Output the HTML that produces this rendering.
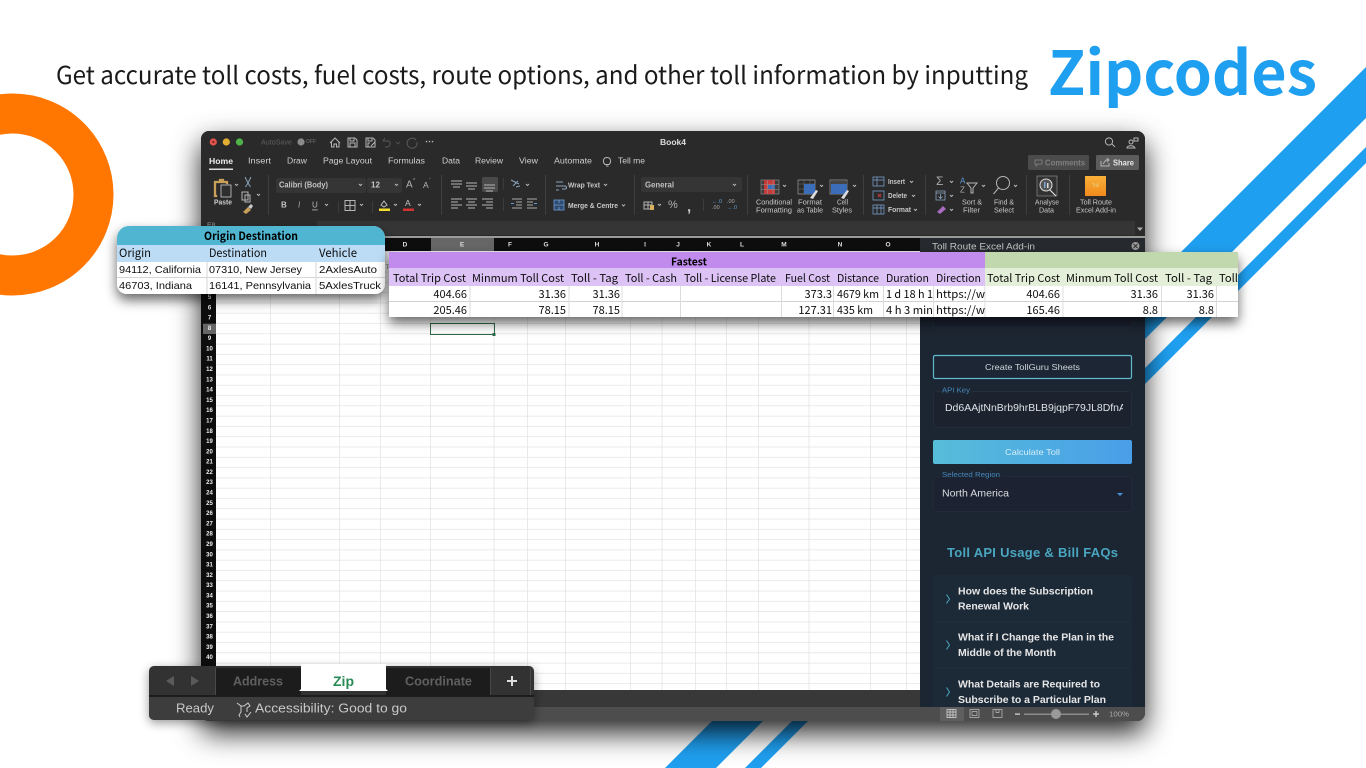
<!DOCTYPE html>
<html lang="en">
<head>
<meta charset="utf-8">
<title>Zipcodes</title>
<style>
html,body{margin:0;padding:0;background:#fff;width:1366px;height:768px;overflow:hidden}
svg{display:block}
text{font-family:"Liberation Sans",sans-serif;dominant-baseline:central;white-space:pre}
.hum,.hum text{font-family:"Noto Sans CJK JP","Liberation Sans",sans-serif}
.base{dominant-baseline:alphabetic}
.r text{fill:#d0d0d0;font-size:8px}
.rb text{fill:#c8c8c8;font-size:7px}
.n text{fill:#eee;font-size:6px;font-weight:bold;text-anchor:middle}
.h text{fill:#ddd;font-size:6.5px;font-weight:bold;text-anchor:middle}
.t text{fill:#0c0c0c;font-size:11px}
.tv text{fill:#0c0c0c;font-size:11px;text-anchor:end}
.ic{fill:none;stroke:#b5b5b5;stroke-width:1}
</style>
</head>
<body>
<svg width="1366" height="768" viewBox="0 0 1366 768" xmlns="http://www.w3.org/2000/svg">
<defs>
<filter id="ws" filterUnits="userSpaceOnUse" x="120" y="90" width="1110" height="678"><feDropShadow dx="0" dy="12" stdDeviation="14" flood-color="#000" flood-opacity=".85"/></filter>
<filter id="ts" filterUnits="userSpaceOnUse" x="90" y="200" width="1190" height="160"><feDropShadow dx="0" dy="6" stdDeviation="6" flood-color="#000" flood-opacity=".6"/></filter>
<filter id="bs" filterUnits="userSpaceOnUse" x="120" y="640" width="450" height="120"><feDropShadow dx="0" dy="3" stdDeviation="5" flood-color="#000" flood-opacity=".4"/></filter>
<filter id="soft" filterUnits="userSpaceOnUse" x="100" y="120" width="1160" height="640"><feGaussianBlur stdDeviation=".28"/></filter>
<linearGradient id="calc" x1="0" x2="1" y1="0" y2="0"><stop offset="0" stop-color="#56bdd9"/><stop offset="1" stop-color="#4a9ee8"/></linearGradient>
<linearGradient id="org" x1="0" x2="0" y1="0" y2="1"><stop offset="0" stop-color="#f9b13a"/><stop offset="1" stop-color="#f08a1c"/></linearGradient>
<pattern id="rows" patternUnits="userSpaceOnUse" x="216" y="293" width="704" height="10.29"><rect width="704" height="10.29" fill="#fff"/><rect y="9.6" width="704" height=".7" fill="#e2e2e2"/></pattern>
</defs>

<!-- Background decor -->
<circle cx="12.5" cy="194.5" r="81" fill="none" stroke="#ff7700" stroke-width="40"/>
<polygon points="1366,67 1366,118 716,768 665,768" fill="#1f9ff0"/>
<polygon points="1366,147 1366,163 761,768 745,768" fill="#1f9ff0"/>

<!-- Title -->
<text class="hum base" x="56" y="84" font-size="24.5" fill="#1a1a1a" textLength="972" lengthAdjust="spacingAndGlyphs">Get accurate toll costs, fuel costs, route options, and other toll information by inputting</text>
<text class="hum base" x="1048" y="95" font-size="61" font-weight="bold" fill="#1f9ff0" textLength="269" lengthAdjust="spacingAndGlyphs">Zipcodes</text>

<!-- Window -->
<rect x="201" y="131" width="944" height="590" rx="8" fill="#2a2a2a" filter="url(#ws)"/>
<g filter="url(#soft)">
<rect x="201" y="131" width="944" height="90" rx="8" fill="#2b2b2b"/>
<rect x="201" y="150" width="944" height="70" fill="#292929"/>
<circle cx="213.3" cy="142" r="3.6" fill="#e2554f"/><circle cx="213.3" cy="142" r="1.2" fill="#8e2520"/>
<circle cx="226.3" cy="142" r="3.6" fill="#e4ae33"/>
<circle cx="239.5" cy="142" r="3.6" fill="#4fb548"/>
<text x="261" y="142" font-size="7.5" fill="#5f5f5f" textLength="31" lengthAdjust="spacingAndGlyphs">AutoSave</text>
<circle cx="301" cy="142" r="3.6" fill="#8a8a8a"/>
<text x="306" y="142" font-size="5" fill="#5f5f5f" font-weight="bold">OFF</text>
<path class="ic" d="M330 143l5-5 5 5M331.500 142v5h2.500v-3h2.500v3h2.500v-5"/>
<path class="ic" d="M348 138h7l2 2v7h-9zM350 138v3h4v-3M350 147v-4h5v4"/>
<path class="ic" d="M366 138h7l2 2v7h-9zM368 138v3h4v-3M368 147v-4h2M371 146l4-4"/>
<path d="M383 141l2-3M383 141h5c3 0 3 6-1 6h-2" fill="none" stroke="#5a5a5a"/>
<path d="M396 142l2 2 2-2" fill="none" stroke="#555" stroke-width=".8"/>
<path d="M416 140a5 5 0 1 0 1 2" fill="none" stroke="#5a5a5a"/>
<text x="425" y="141" font-size="9" font-weight="bold" fill="#bbb">⋯</text>
<text x="660" y="142" font-size="8.500" font-weight="bold" fill="#ddd" textLength="26" lengthAdjust="spacingAndGlyphs">Book4</text>
<circle cx="1109" cy="141.500" r="3.600" class="ic"/><path class="ic" d="M1112 144l3 3"/>
<circle cx="1131" cy="142" r="2" class="ic"/><path class="ic" d="M1127 148c0-3 7-3 8 0zM1134 138h4v3h-4z"/>

<!-- Tabs -->
<g class="r">
<text x="209" y="161" style="font-size:8.5px;font-weight:bold;fill:#eee" textLength="24" lengthAdjust="spacingAndGlyphs">Home</text>
<text x="248" y="161" textLength="23" lengthAdjust="spacingAndGlyphs">Insert</text>
<text x="287" y="161" textLength="20" lengthAdjust="spacingAndGlyphs">Draw</text>
<text x="323" y="161" textLength="49" lengthAdjust="spacingAndGlyphs">Page Layout</text>
<text x="388" y="161" textLength="37" lengthAdjust="spacingAndGlyphs">Formulas</text>
<text x="442" y="161" textLength="18" lengthAdjust="spacingAndGlyphs">Data</text>
<text x="475" y="161" textLength="28" lengthAdjust="spacingAndGlyphs">Review</text>
<text x="519" y="161" textLength="19" lengthAdjust="spacingAndGlyphs">View</text>
<text x="554" y="161" textLength="38" lengthAdjust="spacingAndGlyphs">Automate</text>
<text x="618" y="161" textLength="27" lengthAdjust="spacingAndGlyphs">Tell me</text>
</g>
<rect x="209" y="168.500" width="24" height="1.500" fill="#ddd"/>
<path class="ic" d="M605 164.500c-3-3-1.500-7 2-7s5 4 2 7zM606 166h2.500"/>

<!-- Comments / Share -->
<rect x="1028" y="155" width="61" height="15" rx="1.500" fill="#4c4c4c"/>
<path d="M1035 160h7v4h-4l-2 2v-2h-1z" fill="none" stroke="#777"/>
<text x="1045" y="163" font-size="8" font-weight="bold" fill="#808080" textLength="40" lengthAdjust="spacingAndGlyphs">Comments</text>
<rect x="1096" y="155" width="43" height="15" rx="1.500" fill="#5c5c5c"/>
<path class="ic" d="M1101 161v5h8v-3M1103 164l3-4h3M1107 158l2 2-2 2"/>
<text x="1113" y="163" font-size="8" font-weight="bold" fill="#e8e8e8" textLength="21" lengthAdjust="spacingAndGlyphs">Share</text>

<!-- Ribbon: clipboard -->
<path d="M214 181h5v-2h5v2h4v3h-2v-1h-10v12h1v2h-3z" fill="#c9a05a" stroke="#c9a05a" stroke-width=".3"/>
<rect x="221" y="185" width="10" height="12" fill="#2f2f2f" stroke="#ccc" stroke-width=".8"/>
<path class="ic" d="M235 184l1.500 1.500 1.500-1.500"/>
<text x="214" y="203" font-size="7" font-weight="bold" fill="#ccc" textLength="18" lengthAdjust="spacingAndGlyphs">Paste</text>
<path d="M245 177l3 6 3-6M248 183l-2.500 4M248 183l2.500 4" fill="none" stroke="#8ca3c0" stroke-width="1"/>
<path class="ic" d="M242 192h6v8h-6zM245 195h5v7h-5z"/><path class="ic" d="M257 194l1.500 1.500 1.500-1.500"/>
<path d="M243 212l5-5 3 3-5 4z" fill="#c9a05a"/><path d="M248 207l3-3 2 2-2 3z" fill="#ccc"/>
<rect x="268" y="175" width=".8" height="40" fill="#444"/>

<!-- Font -->
<rect x="276" y="178" width="90" height="15" rx="2" fill="#353535"/>
<rect x="367" y="178" width="35" height="15" rx="2" fill="#353535"/>
<text x="279" y="185" font-size="8" font-weight="bold" fill="#c4c4c4" textLength="49" lengthAdjust="spacingAndGlyphs">Calibri (Body)</text>
<path class="ic" d="M359 184l1.500 1.500 1.500-1.500M395 184l1.500 1.500 1.500-1.500"/>
<text x="371" y="185" font-size="8" font-weight="bold" fill="#c8c8c8">12</text>
<text x="406" y="185" font-size="10" fill="#b5b5b5">A</text><text x="413" y="181" font-size="5" fill="#b5b5b5">^</text>
<text x="423" y="185" font-size="8.500" fill="#b5b5b5">A</text><text x="429" y="181" font-size="5" fill="#b5b5b5">ˇ</text>
<text x="281" y="205" font-size="8" font-weight="bold" fill="#c4c4c4">B</text>
<text x="298" y="205" font-size="8" font-style="italic" fill="#aaa">I</text>
<text x="312" y="205" font-size="8" fill="#bbb" text-decoration="underline">U</text>
<path class="ic" d="M325 204l1.500 1.500 1.500-1.500"/>
<rect x="338" y="201" width=".7" height="12" fill="#444"/>
<path class="ic" d="M345 200.500h10v10h-10zM350 200.500v10M345 205.500h10"/><path class="ic" d="M360 204l1.500 1.500 1.500-1.500"/>
<rect x="372" y="201" width=".7" height="12" fill="#444"/>
<path d="M381 205l3-4 3 4-3 2z" fill="none" stroke="#bbb"/>
<rect x="379" y="208.500" width="11" height="2.500" fill="#f2dc2d"/><path class="ic" d="M394 204l1.500 1.500 1.500-1.500"/>
<text x="405" y="203" font-size="8.500" fill="#c4c4c4">A</text>
<rect x="403" y="208.500" width="11" height="2.500" fill="#d23030"/><path class="ic" d="M418 204l1.500 1.500 1.500-1.500"/>
<rect x="441" y="175" width=".8" height="40" fill="#444"/>

<!-- Align -->
<path class="ic" stroke-width=".9" d="M451 181h11M451 184h11M453 187h7M466 183h11M466 186h11M468 189h7"/>
<rect x="482" y="177" width="16" height="15" rx="1.500" fill="#4a4a4a"/>
<path class="ic" d="M484 185h11M484 188h11M486 191h7"/>
<rect x="503" y="178" width=".7" height="12" fill="#444"/>
<path d="M511 180l8 4M513 186l5-5M516 187l4-1" fill="none" stroke="#8ca3c0"/><path class="ic" d="M526 184l1.500 1.500 1.500-1.500"/>
<path class="ic" d="M451 199h11M451 202h7M451 205h11M451 208h7M466 199h11M468 202h7M466 205h11M468 208h7M482 199h11M486 202h7M482 205h11M486 208h7"/>
<rect x="503" y="198" width=".7" height="13" fill="#444"/>
<path d="M512 199h10M512 208h10M516 202h6M516 205h6" fill="none" stroke="#aaa"/><path d="M511 203.500h3" stroke="#5c9bd5"/>
<path d="M527 199h10M527 208h10M527 202h6M527 205h6" fill="none" stroke="#aaa"/><path d="M534 203.500h3" stroke="#5c9bd5"/>
<rect x="545" y="175" width=".8" height="40" fill="#444"/>

<!-- Wrap -->
<path d="M556 182h7M556 186h9c2 0 2 3 0 3h-3M556 190h3" fill="none" stroke="#8ca3c0"/>
<text x="568" y="185" font-size="7.500" font-weight="bold" fill="#c8c8c8" textLength="32" lengthAdjust="spacingAndGlyphs">Wrap Text</text>
<path class="ic" d="M604 184l1.500 1.500 1.500-1.500"/>
<rect x="554" y="200" width="10" height="10" fill="#2e4b70" stroke="#6a9cd8" stroke-width=".8"/><path d="M554 205h10M559 200v3M559 207v3" stroke="#9cc0e8" stroke-width=".6"/>
<text x="568" y="205.500" font-size="7.500" font-weight="bold" fill="#c8c8c8" textLength="50" lengthAdjust="spacingAndGlyphs">Merge &amp; Centre</text>
<path class="ic" d="M622 204.500l1.500 1.500 1.500-1.500"/>
<rect x="634" y="175" width=".8" height="40" fill="#444"/>

<!-- Number -->
<rect x="641" y="177" width="101" height="15" rx="2" fill="#353535"/>
<text x="645" y="185" font-size="8" font-weight="bold" fill="#c0c0c0" textLength="29" lengthAdjust="spacingAndGlyphs">General</text>
<path class="ic" d="M733 184l1.500 1.500 1.500-1.500"/>
<path class="ic" d="M644 202h8v7h-8zM648 202v7M644 205h8"/><rect x="650" y="205" width="4" height="5" fill="#d8b060"/>
<path class="ic" d="M658 204l1.500 1.500 1.500-1.500"/>
<text x="668" y="205" font-size="11" fill="#b5b5b5">%</text>
<text x="687" y="207" font-size="15" font-weight="bold" fill="#c8c8c8">,</text>
<rect x="703" y="199" width=".7" height="12" fill="#444"/>
<text x="712" y="202" font-size="5.500" fill="#5c9bd5">←.0</text><text x="712" y="208" font-size="5.500" fill="#aaa">.00</text>
<text x="727" y="202" font-size="5.500" fill="#aaa">.00</text><text x="727" y="208" font-size="5.500" fill="#5c9bd5">→.0</text>
<rect x="747" y="175" width=".8" height="40" fill="#444"/>

<!-- Styles -->
<rect x="761" y="180" width="18" height="14" fill="#3c3c3c" stroke="#999" stroke-width=".6"/>
<rect x="764" y="180" width="11" height="5" fill="#c83a3a"/><rect x="764" y="185" width="4" height="4" fill="#c83a3a"/><rect x="768" y="185" width="7" height="4" fill="#3b6db8"/><rect x="764" y="189" width="11" height="5" fill="#c83a3a"/>
<path d="M761 184.700h18M761 189.300h18M767.500 180v14M773 180v14" stroke="#999" stroke-width=".5"/>
<path class="ic" d="M783 185l1.500 1.500 1.500-1.500"/>
<path d="M798 180h17v14h-17z" fill="none" stroke="#999" stroke-width=".7"/><path d="M798 184h17M804 180v14M810 180v14M798 189h17" stroke="#777" stroke-width=".5"/><rect x="804" y="184" width="11" height="10" fill="#3b6db8"/>
<path d="M810 198l6-8 2 1-5 8z" fill="#ddd"/>
<path class="ic" d="M820 185l1.500 1.500 1.500-1.500"/>
<path d="M830 180h17v14h-17z" fill="none" stroke="#999" stroke-width=".7"/><rect x="830" y="181" width="17" height="3" fill="#444"/><rect x="831" y="184" width="16" height="10" fill="#3b6db8"/>
<path d="M841 198l6-8 2 1-5 8z" fill="#ddd"/>
<path class="ic" d="M853 185l1.500 1.500 1.500-1.500"/>
<g class="rb">
<text x="756" y="203" textLength="36" lengthAdjust="spacingAndGlyphs">Conditional</text><text x="756" y="211" textLength="36" lengthAdjust="spacingAndGlyphs">Formatting</text>
<text x="798" y="203" textLength="24" lengthAdjust="spacingAndGlyphs">Format</text><text x="797" y="211" textLength="26" lengthAdjust="spacingAndGlyphs">as Table</text>
<text x="837" y="203" textLength="11" lengthAdjust="spacingAndGlyphs">Cell</text><text x="832" y="211" textLength="20" lengthAdjust="spacingAndGlyphs">Styles</text>
<text x="962" y="203" textLength="20" lengthAdjust="spacingAndGlyphs">Sort &amp;</text><text x="963" y="211" textLength="17" lengthAdjust="spacingAndGlyphs">Filter</text>
<text x="994" y="203" textLength="20" lengthAdjust="spacingAndGlyphs">Find &amp;</text><text x="994" y="211" textLength="20" lengthAdjust="spacingAndGlyphs">Select</text>
<text x="1035" y="203" textLength="24" lengthAdjust="spacingAndGlyphs">Analyse</text><text x="1039" y="211" textLength="15" lengthAdjust="spacingAndGlyphs">Data</text>
<text x="1080" y="203" textLength="32" lengthAdjust="spacingAndGlyphs">Toll Route</text><text x="1076" y="211" textLength="40" lengthAdjust="spacingAndGlyphs">Excel Add-in</text>
</g>
<rect x="863" y="175" width=".8" height="40" fill="#444"/>

<!-- Cells -->
<path d="M873 177h11v9h-11zM873 180h11M877 177v9" fill="none" stroke="#7da6d8" stroke-width=".7"/>
<path d="M873 191h11v9h-11z" fill="none" stroke="#7da6d8" stroke-width=".7"/><path d="M878 194l3 3M881 194l-3 3" stroke="#c83a3a"/>
<path d="M873 205h11v9h-11zM873 208h11M877 205v9M881 205v9" fill="none" stroke="#7da6d8" stroke-width=".7"/>
<text x="888" y="181.500" font-size="7.500" font-weight="bold" fill="#c8c8c8" textLength="17" lengthAdjust="spacingAndGlyphs">Insert</text>
<text x="888" y="195.500" font-size="7.500" font-weight="bold" fill="#c8c8c8" textLength="19" lengthAdjust="spacingAndGlyphs">Delete</text>
<text x="888" y="209.500" font-size="7.500" font-weight="bold" fill="#c8c8c8" textLength="23" lengthAdjust="spacingAndGlyphs">Format</text>
<path class="ic" d="M910 181l1.500 1.500 1.500-1.500M912 195l1.500 1.500 1.500-1.500M914 209l1.500 1.500 1.500-1.500"/>
<rect x="925" y="175" width=".8" height="40" fill="#444"/>

<!-- Editing -->
<text x="936" y="181" font-size="12" fill="#aaa">Σ</text>
<path class="ic" d="M950 181l1.500 1.500 1.500-1.500M950 195l1.500 1.500 1.500-1.500M950 209l1.500 1.500 1.500-1.500"/>
<path d="M936 191h9v9h-9zM936 193h9M940.500 194v4M938.500 196.500l2 2 2-2" fill="none" stroke="#8ca3c0" stroke-width=".8"/>
<path d="M937 212l6-6 3 3-6 5z" fill="#a86dc0"/>
<text x="960" y="181" font-size="8" fill="#5c9bd5">A</text><text x="960" y="190" font-size="8" fill="#aaa">Z</text>
<path class="ic" d="M967 183h10l-4 5v5h-2v-5z"/>
<path class="ic" d="M982 185l1.500 1.500 1.500-1.500"/>
<circle cx="1003" cy="183" r="6.500" class="ic"/><path class="ic" d="M998.500 188l-5 6"/>
<path class="ic" d="M1014 185l1.500 1.500 1.500-1.500"/>
<rect x="1026" y="175" width=".8" height="40" fill="#444"/>

<!-- Analyse -->
<rect x="1037" y="176" width="20" height="20" fill="#333" stroke="#999" stroke-width=".6"/>
<circle cx="1046" cy="185" r="6" fill="#555" stroke="#ddd"/><rect x="1044" y="182" width="1.500" height="6" fill="#7da6d8"/><rect x="1047" y="183" width="1.500" height="5" fill="#ddd"/>
<path d="M1050 190l6 6" stroke="#ddd" stroke-width="1.200"/>
<rect x="1069" y="175" width=".8" height="40" fill="#444"/>
<rect x="1085" y="176" width="21" height="20" fill="url(#org)"/>
<text x="1095.500" y="186" font-size="5" fill="#e8d080" text-anchor="middle">Toll</text>

<!-- Formula bar -->
<rect x="201" y="220" width="944" height="16" fill="#2a2a2a"/>
<rect x="317" y="221" width="818" height="14" fill="#363636"/>
<text x="207" y="226" font-size="7" fill="#999">E8</text>
<path d="M1137 227.500h6l-3 3.500z" fill="#aaa"/>
<rect x="201" y="236" width="944" height="2" fill="#9a9a9a"/>

<!-- Sheet -->
<rect x="201" y="238" width="719" height="470" fill="#111"/>
<rect x="216" y="251" width="704" height="439" fill="url(#rows)"/>
<path d="M270.500 251V690M339.500 251V690M380.500 251V690M430.500 251V690M494 251V690M527.500 251V690M565.500 251V690M630.500 251V690M662 251V690M695.500 251V690M726.500 251V690M758.500 251V690M809 251V690M870.500 251V690M906.500 251V690" stroke="#e2e2e2" stroke-width=".7"/>
<rect x="431" y="238" width="63" height="13" fill="#666"/>
<g class="h">
<text x="405" y="245">D</text><text x="462" y="245">E</text><text x="510" y="245">F</text><text x="546" y="245">G</text><text x="597" y="245">H</text><text x="645" y="245">I</text><text x="678" y="245">J</text><text x="709" y="245">K</text><text x="742" y="245">L</text><text x="784" y="245">M</text><text x="840" y="245">N</text><text x="888" y="245">O</text>
</g>
<rect x="203" y="323.700" width="13" height="10.300" fill="#666"/>
<g class="n">
<text x="209.500" y="298">5</text><text x="209.500" y="308.300">6</text><text x="209.500" y="318.600">7</text><text x="209.500" y="328.900">8</text><text x="209.500" y="339.200">9</text><text x="209.500" y="349.500">10</text><text x="209.500" y="359.700">11</text><text x="209.500" y="370">12</text><text x="209.500" y="380.300">13</text><text x="209.500" y="390.600">14</text><text x="209.500" y="400.900">15</text><text x="209.500" y="411.200">16</text><text x="209.500" y="421.500">17</text><text x="209.500" y="431.800">18</text><text x="209.500" y="442.100">19</text><text x="209.500" y="452.400">20</text><text x="209.500" y="462.600">21</text><text x="209.500" y="472.900">22</text><text x="209.500" y="483.200">23</text><text x="209.500" y="493.500">24</text><text x="209.500" y="503.800">25</text><text x="209.500" y="514.100">26</text><text x="209.500" y="524.400">27</text><text x="209.500" y="534.700">28</text><text x="209.500" y="545">29</text><text x="209.500" y="555.300">30</text><text x="209.500" y="565.500">31</text><text x="209.500" y="575.800">32</text><text x="209.500" y="586.100">33</text><text x="209.500" y="596.400">34</text><text x="209.500" y="606.700">35</text><text x="209.500" y="617">36</text><text x="209.500" y="627.300">37</text><text x="209.500" y="637.600">38</text><text x="209.500" y="647.900">39</text><text x="209.500" y="658.200">40</text>
</g>
<rect x="430.500" y="323.500" width="64" height="11" fill="none" stroke="#2f6b48" stroke-width="1"/>
<rect x="492.500" y="333" width="3" height="3" fill="#2f6b48"/>
<text x="385.500" y="268" font-size="6" fill="#777">Te</text>

<!-- Sheet tabs / status -->
<rect x="201" y="690" width="719" height="18" fill="#383838"/>
<path d="M201 707h944v6c0 4-3 8-8 8H209c-5 0-8-4-8-8z" fill="#4e4e4e"/>

<!-- Task pane -->
<rect x="920" y="238" width="225" height="14" fill="#26292d"/>
<text x="932" y="246.500" font-size="9" fill="#c4c4c4" textLength="103" lengthAdjust="spacingAndGlyphs">Toll Route Excel Add-in</text>
<circle cx="1135.500" cy="246" r="4" fill="#999"/><path d="M1133.500 244l4 4M1137.500 244l-4 4" stroke="#333" stroke-width="1"/>
<rect x="920" y="252" width="225" height="455" fill="#1c2530"/>
<rect x="933" y="290" width="199" height="38" rx="3" fill="#1b2430" stroke="#222c38"/>
<rect x="933.500" y="355.500" width="198" height="23" rx="1.500" fill="#1c2634" stroke="#5fb9cf" stroke-width="1.200"/>
<text x="1032.500" y="367" font-size="8.500" fill="#cfd6da" text-anchor="middle" textLength="95" lengthAdjust="spacingAndGlyphs">Create TollGuru Sheets</text>
<rect x="933.500" y="391.500" width="198" height="36" rx="3" fill="#1a222d" stroke="#232d39"/>
<rect x="940" y="388" width="32" height="6" fill="#1c2530"/>
<text x="942" y="391" font-size="7" fill="#4686bd" textLength="28" lengthAdjust="spacingAndGlyphs">API Key</text>
<svg x="945" y="400" width="178" height="16" viewBox="945 400 178 16"><text x="945" y="408" font-size="10.500" fill="#dde3e8" textLength="181" lengthAdjust="spacingAndGlyphs">Dd6AAjtNnBrb9hrBLB9jqpF79JL8DfnA</text></svg>
<rect x="933" y="440" width="199" height="24" rx="2" fill="url(#calc)"/>
<text x="1032.500" y="452" font-size="8.500" fill="#d6eff8" text-anchor="middle" textLength="55" lengthAdjust="spacingAndGlyphs">Calculate Toll</text>
<rect x="933.500" y="476.500" width="198" height="35" rx="2" fill="#1b2430" stroke="#222c38"/>
<rect x="940" y="472" width="62" height="6" fill="#1c2530"/>
<text x="942" y="475.500" font-size="7" fill="#4686bd" textLength="58" lengthAdjust="spacingAndGlyphs">Selected Region</text>
<text x="942" y="493.500" font-size="10.500" fill="#d8dde0" textLength="67" lengthAdjust="spacingAndGlyphs">North America</text>
<path d="M1117 493h6l-3 3z" fill="#4a90d8"/>
<text x="947" y="552.500" font-size="13" font-weight="bold" fill="#4aa6c0" textLength="171" lengthAdjust="spacing">Toll API Usage &amp; Bill FAQs</text>
<path d="M933 707V579a4 4 0 0 1 4-4h191a4 4 0 0 1 4 4v128z" fill="#1f2a38"/>
<path d="M935 622h195M935 668h195" stroke="#27323f" stroke-width=".8"/>
<path d="M946.500 594.500l3 4.500-3 4.500M946.500 640.500l3 4.500-3 4.500M946.500 687.500l3 4.500-3 4.500" fill="none" stroke="#4aa6c0" stroke-width="1"/>
<text x="958" y="591.500" font-size="10.500" font-weight="bold" fill="#e6e6e6" textLength="135" lengthAdjust="spacing">How does the Subscription</text>
<text x="958" y="606.500" font-size="10.500" font-weight="bold" fill="#e6e6e6" textLength="71" lengthAdjust="spacing">Renewal Work</text>
<text x="958" y="637.500" font-size="10.500" font-weight="bold" fill="#e6e6e6" textLength="156" lengthAdjust="spacing">What if I Change the Plan in the</text>
<text x="958" y="653" font-size="10.500" font-weight="bold" fill="#e6e6e6" textLength="98" lengthAdjust="spacing">Middle of the Month</text>
<text x="958" y="684.500" font-size="10.500" font-weight="bold" fill="#e6e6e6" textLength="142" lengthAdjust="spacing">What Details are Required to</text>
<text x="958" y="700" font-size="10.500" font-weight="bold" fill="#e6e6e6" textLength="148" lengthAdjust="spacing">Subscribe to a Particular Plan</text>
<path d="M1145 707v6c0 4-3 8-8 8h-217v-14z" fill="#4e4e4e"/>
<rect x="940" y="707" width="24" height="14" fill="#5f5f5f"/>
<path d="M947 709.500h9v8h-9zM947 712h9M947 715h9M950 709.500v8M953 709.500v8" fill="none" stroke="#ddd" stroke-width=".7"/>
<path d="M970 709.500h9v8h-9zM972 711.500h5v4h-5z" fill="none" stroke="#bbb" stroke-width=".7"/>
<path d="M993 709.500h9v8h-9zM996 709.500v3h3v-3" fill="none" stroke="#bbb" stroke-width=".7"/>
<rect x="1015" y="713.500" width="5" height="1.200" fill="#ddd"/>
<rect x="1024" y="713.500" width="65" height="1.500" fill="#8a8a8a"/>
<circle cx="1056" cy="714" r="5" fill="#999"/>
<path d="M1093 714h6M1096 711v6" stroke="#ddd" stroke-width="1.200"/>
<text x="1109" y="714" font-size="7.500" fill="#aaa" textLength="20" lengthAdjust="spacingAndGlyphs">100%</text>
</g>

<!-- Origin Destination table -->
<g filter="url(#ts)">
<path d="M117 238a12 12 0 0 1 12-12h244a12 12 0 0 1 12 12v46a10 10 0 0 1-10 10H127a10 10 0 0 1-10-10z" fill="#fff"/>
</g>
<g filter="url(#soft)">
<path d="M117 245v-7a12 12 0 0 1 12-12h244a12 12 0 0 1 12 12v7z" fill="#50b5d0"/>
<rect x="117" y="245" width="268" height="17" fill="#bcdcf6"/>
<path d="M117 277.500h268" stroke="#d5d5d5" stroke-width="1"/>
<path d="M207 262V294M316 262V294" stroke="#d5d5d5" stroke-width="1"/>
<text class="hum" x="204" y="236" font-size="11.500" font-weight="bold" fill="#000" textLength="94" lengthAdjust="spacingAndGlyphs">Origin Destination</text>
<text class="hum" x="119" y="253" font-size="11.500" fill="#0c0c0c" textLength="32" lengthAdjust="spacingAndGlyphs">Origin</text>
<text class="hum" x="209" y="253" font-size="11.500" fill="#0c0c0c" textLength="58" lengthAdjust="spacingAndGlyphs">Destination</text>
<text class="hum" x="319" y="253" font-size="11.500" fill="#0c0c0c" textLength="38" lengthAdjust="spacingAndGlyphs">Vehicle</text>
<text x="119" y="270" font-size="10.500" fill="#111" textLength="82" lengthAdjust="spacingAndGlyphs">94112, California</text>
<text x="209" y="270" font-size="10.500" fill="#111" textLength="93" lengthAdjust="spacingAndGlyphs">07310, New Jersey</text>
<text x="319" y="270" font-size="10.500" fill="#111" textLength="58" lengthAdjust="spacingAndGlyphs">2AxlesAuto</text>
<text x="119" y="286" font-size="10.500" fill="#111" textLength="73" lengthAdjust="spacingAndGlyphs">46703, Indiana</text>
<text x="209" y="286" font-size="10.500" fill="#111" textLength="102" lengthAdjust="spacingAndGlyphs">16141, Pennsylvania</text>
<text x="319" y="286" font-size="10.500" fill="#111" textLength="62" lengthAdjust="spacingAndGlyphs">5AxlesTruck</text>
</g>

<!-- Results table -->
<rect x="389" y="252" width="849" height="65" fill="#fff" filter="url(#ts)"/>
<g filter="url(#soft)">
<rect x="389" y="252" width="596" height="16" fill="#c08bec"/>
<rect x="389" y="268" width="596" height="18" fill="#dcc2f5"/>
<rect x="985" y="252" width="253" height="16" fill="#c1d8ae"/>
<rect x="985" y="268" width="253" height="18" fill="#e3efd9"/>
<path d="M389 301.500h849" stroke="#d2d2d2" stroke-width="1"/>
<path d="M470 286V317M569 286V317M622 286V317M680.500 286V317M781.500 286V317M833.500 286V317M883.500 286V317M933.500 286V317M985 286V317M1063 286V317M1161.500 286V317M1216.500 286V317" stroke="#dcdcdc" stroke-width="1"/>
<text class="hum" x="671" y="262" font-size="10.500" font-weight="bold" fill="#000" textLength="36" lengthAdjust="spacingAndGlyphs">Fastest</text>
<g class="t hum">
<text x="393" y="278" textLength="73" lengthAdjust="spacingAndGlyphs">Total Trip Cost</text>
<text x="472" y="278" textLength="92" lengthAdjust="spacingAndGlyphs">Minmum Toll Cost</text>
<text x="571" y="278" textLength="47" lengthAdjust="spacingAndGlyphs">Toll - Tag</text>
<text x="625" y="278" textLength="52" lengthAdjust="spacingAndGlyphs">Toll - Cash</text>
<text x="684" y="278" textLength="92" lengthAdjust="spacingAndGlyphs">Toll - License Plate</text>
<text x="785" y="278" textLength="45" lengthAdjust="spacingAndGlyphs">Fuel Cost</text>
<text x="837" y="278" textLength="42" lengthAdjust="spacingAndGlyphs">Distance</text>
<text x="886" y="278" textLength="43" lengthAdjust="spacingAndGlyphs">Duration</text>
<text x="936" y="278" textLength="45" lengthAdjust="spacingAndGlyphs">Direction</text>
<text x="987" y="278" textLength="73" lengthAdjust="spacingAndGlyphs">Total Trip Cost</text>
<text x="1066" y="278" textLength="92" lengthAdjust="spacingAndGlyphs">Minmum Toll Cost</text>
<text x="1165" y="278" textLength="47" lengthAdjust="spacingAndGlyphs">Toll - Tag</text>
<text x="1219" y="278" textLength="19" lengthAdjust="spacingAndGlyphs">Toll</text>
<text x="837" y="294" textLength="42" lengthAdjust="spacingAndGlyphs">4679 km</text>
<text x="886" y="294" textLength="47" lengthAdjust="spacingAndGlyphs">1 d 18 h 1</text>
<text x="936" y="294" textLength="49" lengthAdjust="spacingAndGlyphs">https://w</text>
<text x="837" y="310" textLength="36" lengthAdjust="spacingAndGlyphs">435 km</text>
<text x="886" y="310" textLength="47" lengthAdjust="spacingAndGlyphs">4 h 3 min</text>
<text x="936" y="310" textLength="49" lengthAdjust="spacingAndGlyphs">https://w</text>
</g>
<g class="tv hum">
<text x="467" y="294">404.66</text><text x="566" y="294">31.36</text><text x="620" y="294">31.36</text><text x="832" y="294">373.3</text><text x="1060" y="294">404.66</text><text x="1158" y="294">31.36</text><text x="1214" y="294">31.36</text>
<text x="467" y="310">205.46</text><text x="566" y="310">78.15</text><text x="620" y="310">78.15</text><text x="832" y="310">127.31</text><text x="1060" y="310">165.46</text><text x="1158" y="310">8.8</text><text x="1214" y="310">8.8</text>
</g>
</g>

<!-- Tab overlay -->
<rect x="149" y="666" width="385" height="54" rx="5" fill="#333" filter="url(#bs)"/>
<g filter="url(#soft)">
<path d="M149 697h385v18a5 5 0 0 1-5 5H154a5 5 0 0 1-5-5z" fill="#3e3e3e"/>
<rect x="149" y="695" width="385" height="2" fill="#1d1d1d"/>
<rect x="216" y="668" width="85" height="27" fill="#1e1e1e"/>
<rect x="386" y="668" width="104" height="27" fill="#1e1e1e"/>
<path d="M301 664h85v25l2 2h-89l2-2z" fill="#fff"/>
<rect x="490" y="668" width="1" height="27" fill="#4a4a4a"/><rect x="215" y="668" width="1" height="27" fill="#4a4a4a"/>
<rect x="530" y="668" width="1" height="27" fill="#4a4a4a"/>
<path d="M174 676l-8 5 8 5z" fill="#5a5a5a"/><path d="M191 676l8 5-8 5z" fill="#5a5a5a"/>
<text x="233" y="681" font-size="13" font-weight="bold" fill="#5f5f5f" textLength="50" lengthAdjust="spacingAndGlyphs">Address</text>
<text x="333" y="681" font-size="14" font-weight="bold" fill="#2a8a55" textLength="21" lengthAdjust="spacingAndGlyphs">Zip</text>
<text x="405" y="681" font-size="13" font-weight="bold" fill="#5f5f5f" textLength="67" lengthAdjust="spacingAndGlyphs">Coordinate</text>
<path d="M507 681h10M512 676v10" stroke="#ddd" stroke-width="2"/>
<text x="176" y="708.500" font-size="12.500" fill="#c8c8c8" textLength="38" lengthAdjust="spacingAndGlyphs">Ready</text>
<path d="M237 703l4 3h3l4-3 2 3-3 2v4M241 706v6l-2 3 1 2M245 714l2 3 4-5" fill="none" stroke="#ccc" stroke-width="1"/>
<text x="255" y="708.500" font-size="12.500" fill="#c8c8c8" textLength="152" lengthAdjust="spacingAndGlyphs">Accessibility: Good to go</text>
</g>
</svg>
</body>
</html>
